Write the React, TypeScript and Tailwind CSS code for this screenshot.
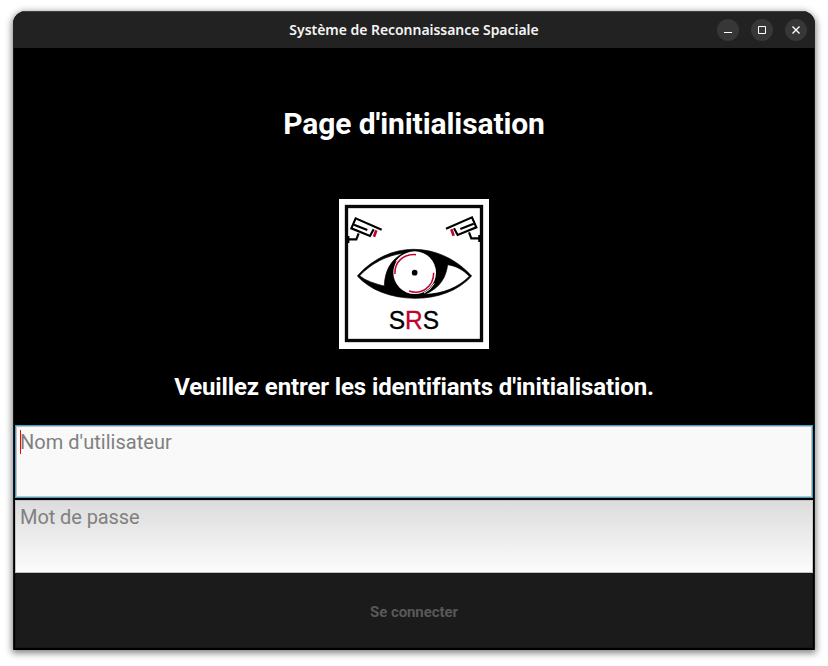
import React from "react";

function Camera({ flip = false }: { flip?: boolean }) {
  return (
    <g transform={flip ? "translate(479 -3) scale(-1 1)" : undefined} fill="none" stroke="#000" strokeWidth="6.500">
      <path d="M143 107L65 73L52 103L108 126L119 106" />
      <path d="M60 92L100 108M74 118L67 136H42M43 126V147" />
      <path d="M127 109L120 128" stroke="#c4002f" strokeWidth="8" />
    </g>
  );
}

function Logo() {
  return (
    <svg width="150" height="150" viewBox="15 15 450 450" className="block bg-white">
      <rect x="37.500" y="37.500" width="405" height="402" fill="none" stroke="#080808" strokeWidth="10" />
      <Camera />
      <Camera flip />
      <path
        fillRule="evenodd"
        stroke="#000"
        strokeWidth="2"
        d="M70 246C112 198 172 166 240 166C312 167 371 200 413 246C373 291 310 313 243 313C169 312 108 288 70 246ZM77 245C95 260 122 269 151 276C152 234 168 197 208 178C157 184 113 208 77 245ZM341 212C336 250 319 281 273 301C326 300 373 280 406 247C388 228 367 216 341 212Z"
      />
      <circle cx="242" cy="236" r="64" fill="#fff" />
      <path d="M186 202Q194 189 211 182M270 297Q290 288 301 268" fill="none" stroke="#fff" strokeWidth="3" />
      <path d="M183 240C181 204 207 180 246 182M299 236C299 277 264 304 225 291" fill="none" stroke="#c4002f" strokeWidth="4.500" />
      <circle cx="242" cy="236" r="8.500" />
      <text x="164" y="405" fontSize="77" textLength="151" lengthAdjust="spacingAndGlyphs" fontFamily="Liberation Sans, sans-serif" stroke="#000" strokeWidth="1">
        S<tspan fill="#c4002f" stroke="#c4002f">R</tspan>S
      </text>
    </svg>
  );
}

function WindowButton({ label, children }: { label: string; children: React.ReactNode }) {
  return (
    <button aria-label={label} className="flex size-[22px] items-center justify-center rounded-full bg-[#373737]">
      <svg width="22" height="22" viewBox="0 0 22 22" fill="none" stroke="#fff">
        {children}
      </svg>
    </button>
  );
}

export default function App() {
  return (
    <main className="h-[666px] w-[828px] overflow-hidden bg-white pt-[11px] pl-[13px] font-['Roboto',sans-serif]">
      <section className="flex h-[639px] w-[802px] flex-col overflow-hidden rounded-t-[13px] bg-black shadow-[0_2px_7px_1px_rgba(0,0,0,0.5)]">
        <header className="grid h-[37px] shrink-0 grid-cols-[1fr_auto_1fr] items-center border-t border-[#414141] bg-[#222222]">
          <span />
          <h1 className="w-[252px] text-center font-['Noto_Sans',sans-serif] text-[14px] leading-5 font-semibold tracking-[-0.04px] whitespace-nowrap text-[#f4f4f4]">
            Système de Reconnaissance Spaciale
          </h1>
          <div className="flex justify-end gap-3 pr-2">
            <WindowButton label="Réduire"><path d="M7 13.500H15" /></WindowButton>
            <WindowButton label="Agrandir"><path d="M7.500 7.500H14.500V14.500H7.500Z" /></WindowButton>
            <WindowButton label="Fermer"><path d="M7.500 7.500L14.500 14.500M14.500 7.500L7.500 14.500" strokeWidth="1.400" /></WindowButton>
          </div>
        </header>
        <div className="flex flex-1 flex-col items-center border-x border-[#181818]">
          <h2 className="mt-[58px] h-9 text-[30px] leading-9 font-bold tracking-[-0.1px] whitespace-nowrap text-white">Page d'initialisation</h2>
          <div className="mt-[57px]"><Logo /></div>
          <p className="mt-[22px] h-8 text-[24px] leading-8 font-bold tracking-[-0.12px] [font-variant-ligatures:common-ligatures] whitespace-nowrap text-white">Veuillez entrer les identifiants d'initialisation.</p>
          <div className="mt-[22px] h-[73px] w-[798px] border border-[#36a5d5] bg-[#f9f9f9]">
            <div className="flex h-full border border-[#c5c1c5] pt-[3px] pl-[3px]">
              <span className="h-6 w-px bg-[#ff0000]" />
              <span className="-ml-px text-[20px] leading-6 tracking-[0.03px] text-[#808080]">Nom d'utilisateur</span>
            </div>
          </div>
          <div className="mt-0.5 h-[73px] w-[798px] border border-[#c6c3c6] bg-linear-to-b from-[#dddcdd] to-[#fcfcfc] pt-1 pl-1 text-[20px] leading-6 tracking-[-0.08px] text-[#808080]">Mot de passe</div>
          <button className="h-[75px] w-[798px] border border-[#151515] bg-[#1b1b1b] pt-1 text-[15px] font-bold tracking-[-0.08px] text-[#585858]">Se connecter</button>
        </div>
      </section>
    </main>
  );
}
